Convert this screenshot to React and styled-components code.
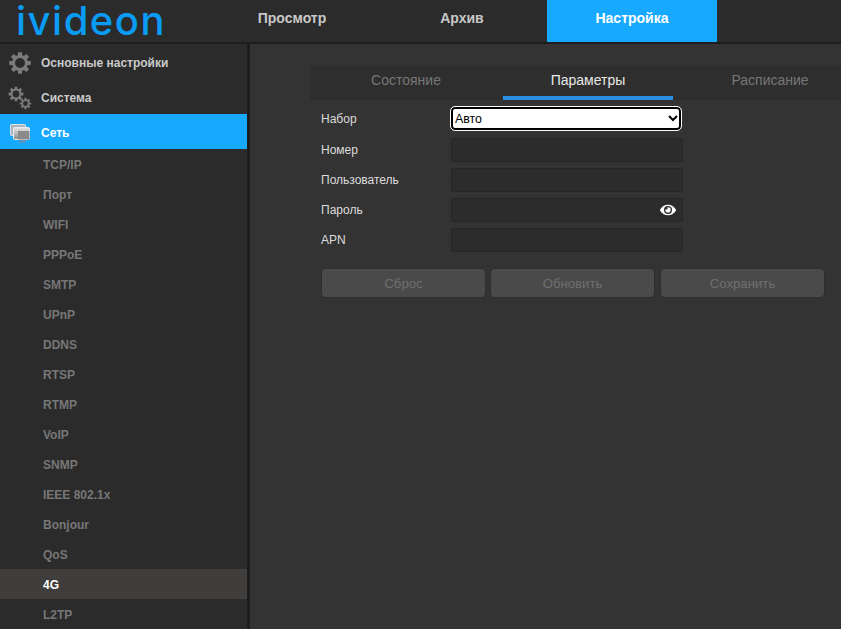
import React from 'react';
import styled, { createGlobalStyle } from 'styled-components';
import { FaEye } from 'react-icons/fa';

const Global = createGlobalStyle`
  html, body { margin: 0; padding: 0; height: 100%; overflow: hidden; background: #333; }
  * { box-sizing: border-box; }
`;

const Page = styled.div`
  width: 841px; height: 629px; display: flex; flex-direction: column; overflow: hidden;
  background: #1d1d1d; font-family: "Liberation Sans", Arial, sans-serif;
`;
const Header = styled.header`
  height: 42px; flex: none; display: flex; background: #2b2b2b;
`;
const LogoBox = styled.div`
  width: 207px; flex: none; padding-left: 16px; height: 42px;
`;
const Logo = styled.div`
  font-family: Inter, sans-serif; font-size: 40px; font-weight: 500; line-height: 42px;
  letter-spacing: 1.5px; color: #0a9bf5;
`;
const NavTab = styled.div`
  width: 170px; height: 42px; display: flex; align-items: center; justify-content: center;
  font-size: 14px; font-weight: 700; padding-bottom: 7px;
  color: ${p => (p.$active ? '#fff' : '#c8c8c8')};
  background: ${p => (p.$active ? '#17a8ff' : 'transparent')};
`;
const Body = styled.div`
  flex: 1; min-height: 0; display: flex; margin-top: 2px; gap: 3px;
`;
const Sidebar = styled.nav`
  width: 247px; flex: none; background: #2b2b2b; overflow: hidden;
`;
const MainItem = styled.div`
  height: 35px; display: flex; align-items: center; padding: 2px 0 0 8px; gap: 9px;
  font-size: 12px; font-weight: 700;
  color: ${p => (p.$active ? '#fff' : '#c9c9c9')};
  background: ${p => (p.$active ? '#17a8ff' : 'transparent')};
`;
const IconBox = styled.span`
  width: 24px; height: 24px; flex: none; display: block;
  svg { display: block; }
`;
const SubItem = styled.div`
  height: 30px; display: flex; align-items: center; padding: 2px 0 0 43px;
  font-size: 12px; font-weight: 700;
  color: ${p => (p.$active ? '#fff' : '#777')};
  background: ${p => (p.$active ? '#3f3e3d' : 'transparent')};
`;
const Content = styled.main`
  flex: 1; min-width: 0; background: #333; padding: 21px 0 0 60px; overflow: hidden;
`;
const Tabs = styled.div`
  height: 35px; display: flex; gap: 12px; padding-left: 11px; background: #2e2e2e; overflow: hidden;
`;
const TabItem = styled.div`
  width: 170px; flex: none; height: 35px; display: flex; align-items: center; justify-content: center;
  font-size: 14px; padding-bottom: 1px;
  color: ${p => (p.$active ? '#e8e8e8' : '#777')};
  border-bottom: 4px solid ${p => (p.$active ? '#2b8ee0' : 'transparent')};
`;
const Form = styled.div`
  padding: 7px 0 0 11px; display: flex; flex-direction: column;
`;
const Row = styled.div`
  height: 30px; display: flex; align-items: flex-start;
`;
const SelectRow = styled(Row)`
  height: 31px;
`;
const Label = styled.label`
  width: 130px; flex: none; font-size: 12px; line-height: 25px; color: #dcdcdc;
`;
const Select = styled.select`
  width: 230px; height: 23px; font: 12.4px "Liberation Sans", Arial, sans-serif; color: #000;
  background: #fff; border: 0; border-radius: 4px; outline: 1px solid #fff;
  box-shadow: inset 0 0 0 2px #000; padding: 1px 2px 0 0;
`;
const Field = styled.div`
  position: relative; width: 232px; height: 24px;
`;
const Input = styled.input`
  width: 100%; height: 100%; display: block; background: #2c2c2c;
  border: 1px solid #262626; border-radius: 2px; outline: none; color: #ddd; padding: 0 4px;
`;
const Eye = styled.span`
  position: absolute; right: 7px; top: 4px; color: #fff; display: flex;
`;
const Buttons = styled.div`
  display: flex; gap: 4px; margin-top: 10px;
`;
const Button = styled.button`
  width: 165px; height: 30px; background: #4a4a4a; border: 1px solid #2e2e2e; border-radius: 5px;
  font: 13.2px "Liberation Sans", Arial, sans-serif; color: #6f6f6f; padding: 0;
  &:nth-child(3) { margin-left: 1px; }
`;

function gearPath(cx, cy, rOut, rIn, hole, teeth) {
  const pts = [];
  const step = (Math.PI * 2) / teeth;
  for (let i = 0; i < teeth; i++) {
    const a = i * step - Math.PI / 2;
    const w = step * 0.24;
    const w2 = step * 0.34;
    pts.push([a - w2, rIn], [a - w, rOut], [a + w, rOut], [a + w2, rIn]);
  }
  const d = pts
    .map(([a, r], i) => `${i ? 'L' : 'M'}${(cx + r * Math.cos(a)).toFixed(2)} ${(cy + r * Math.sin(a)).toFixed(2)}`)
    .join(' ');
  return `${d} Z M${cx + hole} ${cy} A${hole} ${hole} 0 1 0 ${cx - hole} ${cy} A${hole} ${hole} 0 1 0 ${cx + hole} ${cy} Z`;
}

const GearIcon = () => (
  <svg width="24" height="24" viewBox="0 0 24 24">
    <path fillRule="evenodd" fill="#7b7b7b" d={gearPath(12, 12, 11, 8, 5, 8)} />
  </svg>
);
const GearsIcon = () => (
  <svg width="24" height="24" viewBox="0 0 24 24">
    <path fillRule="evenodd" fill="#7b7b7b" d={gearPath(8, 8, 7.5, 5.4, 3.4, 8)} />
    <path fillRule="evenodd" fill="#7b7b7b" d={gearPath(17.5, 17.5, 5.8, 4.1, 2.4, 8)} />
  </svg>
);
const NetIcon = () => (
  <svg width="24" height="24" viewBox="0 0 24 24">
    <defs>
      <linearGradient id="scr" x1="0" y1="0" x2="0" y2="1">
        <stop offset="0" stopColor="#e4e4e4" />
        <stop offset="1" stopColor="#8d8d8d" />
      </linearGradient>
    </defs>
    <rect x="2.5" y="3.5" width="15" height="11" rx="1" fill="#a9b4bb" stroke="#dfe8ee" strokeWidth="1" />
    <rect x="5.5" y="6.5" width="16" height="12" rx="1" fill="url(#scr)" stroke="#e8eef2" strokeWidth="1" />
    <rect x="10" y="10" width="11.5" height="8.5" fill="#8a8a8a" />
    <rect x="11" y="19.5" width="7" height="2" fill="#6f8ea3" />
  </svg>
);

const subItems = ['TCP/IP', 'Порт', 'WIFI', 'PPPoE', 'SMTP', 'UPnP', 'DDNS', 'RTSP', 'RTMP', 'VoIP', 'SNMP', 'IEEE 802.1x', 'Bonjour', 'QoS', '4G', 'L2TP'];
const textFields = ['Номер', 'Пользователь', 'Пароль', 'APN'];

export default function App() {
  return (
    <Page>
      <Global />
      <Header>
        <LogoBox><Logo>ivideon</Logo></LogoBox>
        <NavTab>Просмотр</NavTab>
        <NavTab>Архив</NavTab>
        <NavTab $active>Настройка</NavTab>
      </Header>
      <Body>
        <Sidebar>
          <MainItem><IconBox><GearIcon /></IconBox>Основные настройки</MainItem>
          <MainItem><IconBox><GearsIcon /></IconBox>Система</MainItem>
          <MainItem $active><IconBox><NetIcon /></IconBox>Сеть</MainItem>
          {subItems.map(s => <SubItem key={s} $active={s === '4G'}>{s}</SubItem>)}
        </Sidebar>
        <Content>
          <Tabs>
            <TabItem>Состояние</TabItem>
            <TabItem $active>Параметры</TabItem>
            <TabItem>Расписание</TabItem>
          </Tabs>
          <Form>
            <SelectRow>
              <Label>Набор</Label>
              <Select defaultValue="auto"><option value="auto">Авто</option></Select>
            </SelectRow>
            {textFields.map(f => (
              <Row key={f}>
                <Label>{f}</Label>
                <Field>
                  <Input type={f === 'Пароль' ? 'password' : 'text'} />
                  {f === 'Пароль' && <Eye><FaEye size={16} /></Eye>}
                </Field>
              </Row>
            ))}
            <Buttons>
              <Button>Сброс</Button>
              <Button>Обновить</Button>
              <Button>Сохранить</Button>
            </Buttons>
          </Form>
        </Content>
      </Body>
    </Page>
  );
}
